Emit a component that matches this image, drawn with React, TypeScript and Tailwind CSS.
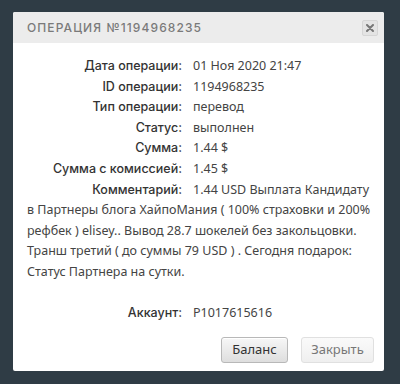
const rows: { label: string; value: string }[] = [
  { label: 'Дата операции:', value: '01 Ноя 2020 21:47' },
  { label: 'ID операции:', value: '1194968235' },
  { label: 'Тип операции:', value: 'перевод' },
  { label: 'Статус:', value: 'выполнен' },
  { label: 'Сумма:', value: '1.44 $' },
  { label: 'Сумма с комиссией:', value: '1.45 $' },
];

const comment =
  '1.44 USD Выплата Кандидату в Партнеры блога ХайпоМания ( 100% страховки и 200% рефбек ) elisey.. Вывод 28.7 шокелей без закольцовки. Транш третий ( до суммы 79 USD ) . Сегодня подарок: Статус Партнера на сутки.';

const Label = ({ children }: { children: string }) => (
  <span className="inline-block w-[155px] mr-[11px] text-right font-['Inter',sans-serif] font-medium text-[12.5px] text-[#333]">
    {children}
  </span>
);

export default function App() {
  return (
    <div
      className="w-[400px] h-[384px] bg-[#2f3c45] pt-[12px] pl-[13px]"
      style={{ fontFamily: '"Noto Sans", sans-serif' }}
    >
      <div className="w-[371px] h-[359px] bg-white rounded-[2px] overflow-hidden flex flex-col">
        {/* Header */}
        <div className="h-[31px] bg-[#ececec] flex items-center justify-between pl-[14px] pr-[6px]">
          <span className="text-[12px] tracking-[1.1px] text-[#7a7a7a] font-['Inter',sans-serif] font-medium">
            ОПЕРАЦИЯ №1194968235
          </span>
          <button className="w-[16px] h-[16px] rounded-[2px] border border-[#d6d6d6] bg-[#e4e4e4] flex items-center justify-center">
            <svg width="8" height="8" viewBox="0 0 8 8">
              <path d="M1 1L7 7M7 1L1 7" stroke="#777" strokeWidth="2" strokeLinecap="round" />
            </svg>
          </button>
        </div>

        {/* Body */}
        <div className="pt-[13px] pl-[14px] pr-[12px] text-[12.5px] leading-[20.6px] text-[#444]">
          {rows.map((row) => (
            <div key={row.label}>
              <Label>{row.label}</Label>
              {row.value}
            </div>
          ))}
          <div>
            <Label>Комментарий:</Label>
            {comment}
          </div>
          <div className="mt-[20.6px]">
            <Label>Аккаунт:</Label>
            P1017615616
          </div>
        </div>

        {/* Footer */}
        <div className="mt-auto mb-[8px] mr-[10px] flex justify-end gap-[13px] text-[13px]">
          <button className="w-[67px] h-[26px] rounded-[3px] border border-[#b8b8b8] bg-gradient-to-b from-[#f7f7f7] to-[#dedede] text-[#333] shadow-[inset_0_1px_0_#fff]">
            Баланс
          </button>
          <button className="w-[73px] h-[26px] rounded-[3px] border border-[#e0e0e0] bg-gradient-to-b from-[#fafafa] to-[#efefef] text-[#777]">
            Закрыть
          </button>
        </div>
      </div>
    </div>
  );
}
